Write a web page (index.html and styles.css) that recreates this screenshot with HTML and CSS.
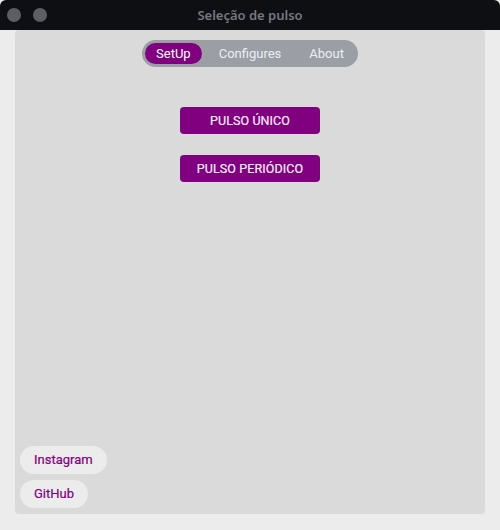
FILE: index.html
```html
<!DOCTYPE html>
<html lang="pt">
<head>
  <meta charset="UTF-8">
  <meta name="viewport" content="width=device-width, initial-scale=1.0">
  <title>Seleção de pulso</title>
  <link rel="stylesheet" href="styles.css">
</head>
<body>
  <!-- Window title bar -->
  <div class="titlebar">
    <div class="window-dots">
      <span class="dot"></span>
      <span class="dot"></span>
    </div>
    <div class="window-title">Seleção de pulso</div>
  </div>

  <div class="app-card">
    <!-- Tabs -->
    <div class="tabs-row">
      <div class="tabs">
        <div class="tab active">SetUp</div>
        <div class="tab">Configures</div>
        <div class="tab">About</div>
      </div>
    </div>

    <!-- Pulse buttons -->
    <div class="actions">
      <button class="pulse-btn">PULSO ÚNICO</button>
      <button class="pulse-btn">PULSO PERIÓDICO</button>
    </div>

    <!-- Footer links -->
    <div class="links">
      <a class="link-pill">Instagram</a>
      <a class="link-pill">GitHub</a>
    </div>
  </div>
</body>
</html>
```

FILE: styles.css
```css
:root {
  --purple: #800080;
  --bar-dark: #0e0f13;
  --window-bg: #ececec;
  --card-bg: #dadada;
  --tabs-bg: #9b9ea5;
}

body {
  margin: 0;
  padding: 0;
  background: var(--window-bg);
  font-family: Roboto, "Noto Sans", sans-serif;
  height: 530px;
  display: flex;
  flex-direction: column;
}

.titlebar {
  height: 30px;
  background: var(--bar-dark);
  border-radius: 6px 6px 0 0;
  position: relative;
  display: flex;
  align-items: center;
  justify-content: center;
  flex-shrink: 0;
}

.window-dots {
  position: absolute;
  left: 7px;
  top: 8px;
  display: flex;
  gap: 12px;
}

.dot {
  width: 14px;
  height: 14px;
  border-radius: 50%;
  background: #5d5d64;
}

.window-title {
  color: #77777f;
  font-family: "Noto Sans", sans-serif;
  font-weight: 600;
  font-size: 13px;
}

.app-card {
  margin: 0 15px 16px;
  flex: 1;
  background: var(--card-bg);
  border-radius: 4px;
  display: flex;
  flex-direction: column;
}

.tabs-row {
  display: flex;
  justify-content: center;
  padding-top: 10px;
}

.tabs {
  display: flex;
  gap: 6px;
  padding: 3px;
  background: var(--tabs-bg);
  border-radius: 14px;
}

.tab {
  height: 21px;
  line-height: 21px;
  padding: 0 11px;
  border-radius: 11px;
  font-size: 13px;
  color: #eceef4;
}

.tab.active {
  background: var(--purple);
  color: #ffffff;
}

.actions {
  display: flex;
  flex-direction: column;
  align-items: center;
  gap: 21px;
  padding-top: 40px;
}

/* medium weight look: regular face with a thin stroke */
.pulse-btn {
  width: 140px;
  height: 27px;
  border: none;
  border-radius: 4px;
  background: var(--purple);
  color: #f4eef4;
  font-family: Roboto, sans-serif;
  font-weight: 400;
  font-size: 12.5px;
  letter-spacing: 0.1px;
  -webkit-text-stroke: 0.2px #f4eef4;
  padding: 0;
  cursor: pointer;
}

.links {
  margin-top: auto;
  display: flex;
  flex-direction: column;
  align-items: flex-start;
  gap: 6px;
  padding: 0 0 6px 5px;
}

.link-pill {
  height: 28px;
  line-height: 28px;
  padding: 0 14px;
  border-radius: 14px;
  background: var(--window-bg);
  color: var(--purple);
  font-size: 13px;
  font-weight: 400;
  -webkit-text-stroke: 0.2px var(--purple);
  cursor: pointer;
}
```
